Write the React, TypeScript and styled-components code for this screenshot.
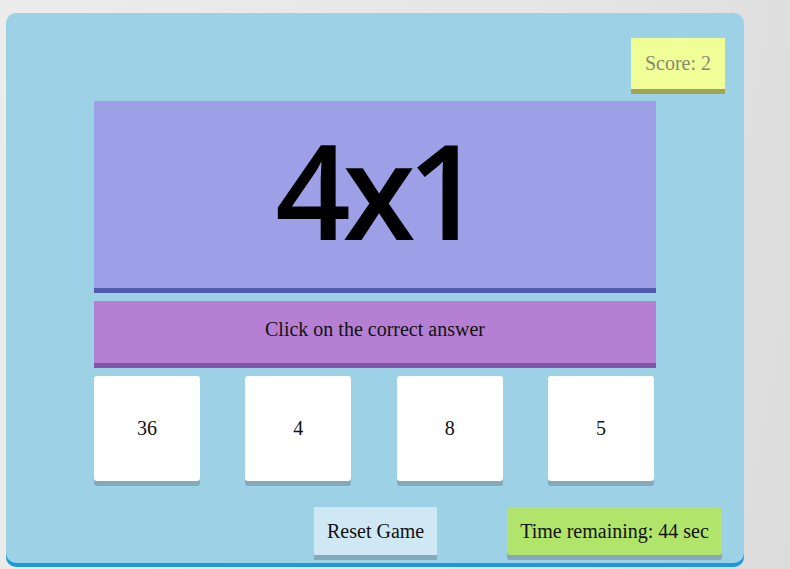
import { createGlobalStyle, styled } from "styled-components";

const GlobalStyle = createGlobalStyle`
    html, body {
        margin: 0;
        padding: 0;
        height: 100%;
    }
    body {
        background: linear-gradient(100deg, #ececec 0%, #e6e6e6 60%, #dcdcdc 100%);
        font-family: "Liberation Serif", "Times New Roman", serif;
        overflow: hidden;
    }
`;

const Page = styled.div`
    padding: 13px 0 0 6px;
`;

const Container = styled.div`
    width: 738px;
    height: 550px;
    box-sizing: border-box;
    background-color: #9dd1e6;
    border-radius: 10px;
    box-shadow: 0 4px 0 #1a9ad9;
    padding-top: 25px;
`;

const ScoreRow = styled.div`
    display: flex;
    justify-content: flex-end;
    padding-right: 19px;
    margin-bottom: 12px;
`;

const Score = styled.div`
    width: 94px;
    height: 51px;
    display: flex;
    align-items: center;
    justify-content: center;
    background-color: #f0fe97;
    box-shadow: 0 5px 0 #9ea556;
    color: #888a6e;
    font-size: 20px;
`;

const Column = styled.div`
    margin-left: 88px;
    width: 562px;
    display: flex;
    flex-direction: column;
    gap: 8px;
`;

const Question = styled.div`
    height: 192px;
    box-sizing: border-box;
    padding-bottom: 12px;
    background-color: #9da0e6;
    border-bottom: 5px solid #525aab;
    display: flex;
    align-items: center;
    justify-content: center;
    font-family: "Comic Sans MS", "Open Sans", sans-serif;
    font-size: 132px;
    font-weight: 600;
    letter-spacing: -8px;
    color: #000;
`;

const Instruction = styled.div`
    height: 67px;
    box-sizing: border-box;
    padding-bottom: 5px;
    background-color: #b580d4;
    border-bottom: 5px solid #8157a5;
    display: flex;
    align-items: center;
    justify-content: center;
    font-size: 20px;
    color: #111;
`;

const Choices = styled.div`
    display: flex;
    justify-content: space-between;
    padding-right: 2px;
`;

const Choice = styled.div`
    width: 106px;
    height: 105px;
    background-color: #fff;
    border-radius: 3px;
    box-shadow: 0 5px 0 #84a9bb;
    display: flex;
    align-items: center;
    justify-content: center;
    font-size: 20px;
    color: #111;
    cursor: pointer;
`;

const Footer = styled.div`
    display: flex;
    gap: 70px;
    padding-left: 308px;
    margin-top: 26px;
`;

const FooterBox = styled.div<{ $bg: string; $radius?: number }>`
    height: 48px;
    padding: 0 13px;
    display: flex;
    align-items: center;
    background-color: ${(props) => props.$bg};
    border-radius: ${(props) => props.$radius ?? 0}px;
    box-shadow: 0 5px 0 #84a9bb;
    font-size: 20px;
    color: #111;
`;

const answers = [36, 4, 8, 5];

const App = () => {
    return (
        <Page>
            <GlobalStyle />
            <Container>
                <ScoreRow>
                    <Score>Score: 2</Score>
                </ScoreRow>
                <Column>
                    <Question>4x1</Question>
                    <Instruction>Click on the correct answer</Instruction>
                    <Choices>
                        {answers.map((a) => (
                            <Choice key={a}>{a}</Choice>
                        ))}
                    </Choices>
                </Column>
                <Footer>
                    <FooterBox $bg="#d0e8f3">Reset Game</FooterBox>
                    <FooterBox $bg="#b1e46a" $radius={3}>
                        Time remaining: 44 sec
                    </FooterBox>
                </Footer>
            </Container>
        </Page>
    );
};

export default App;
